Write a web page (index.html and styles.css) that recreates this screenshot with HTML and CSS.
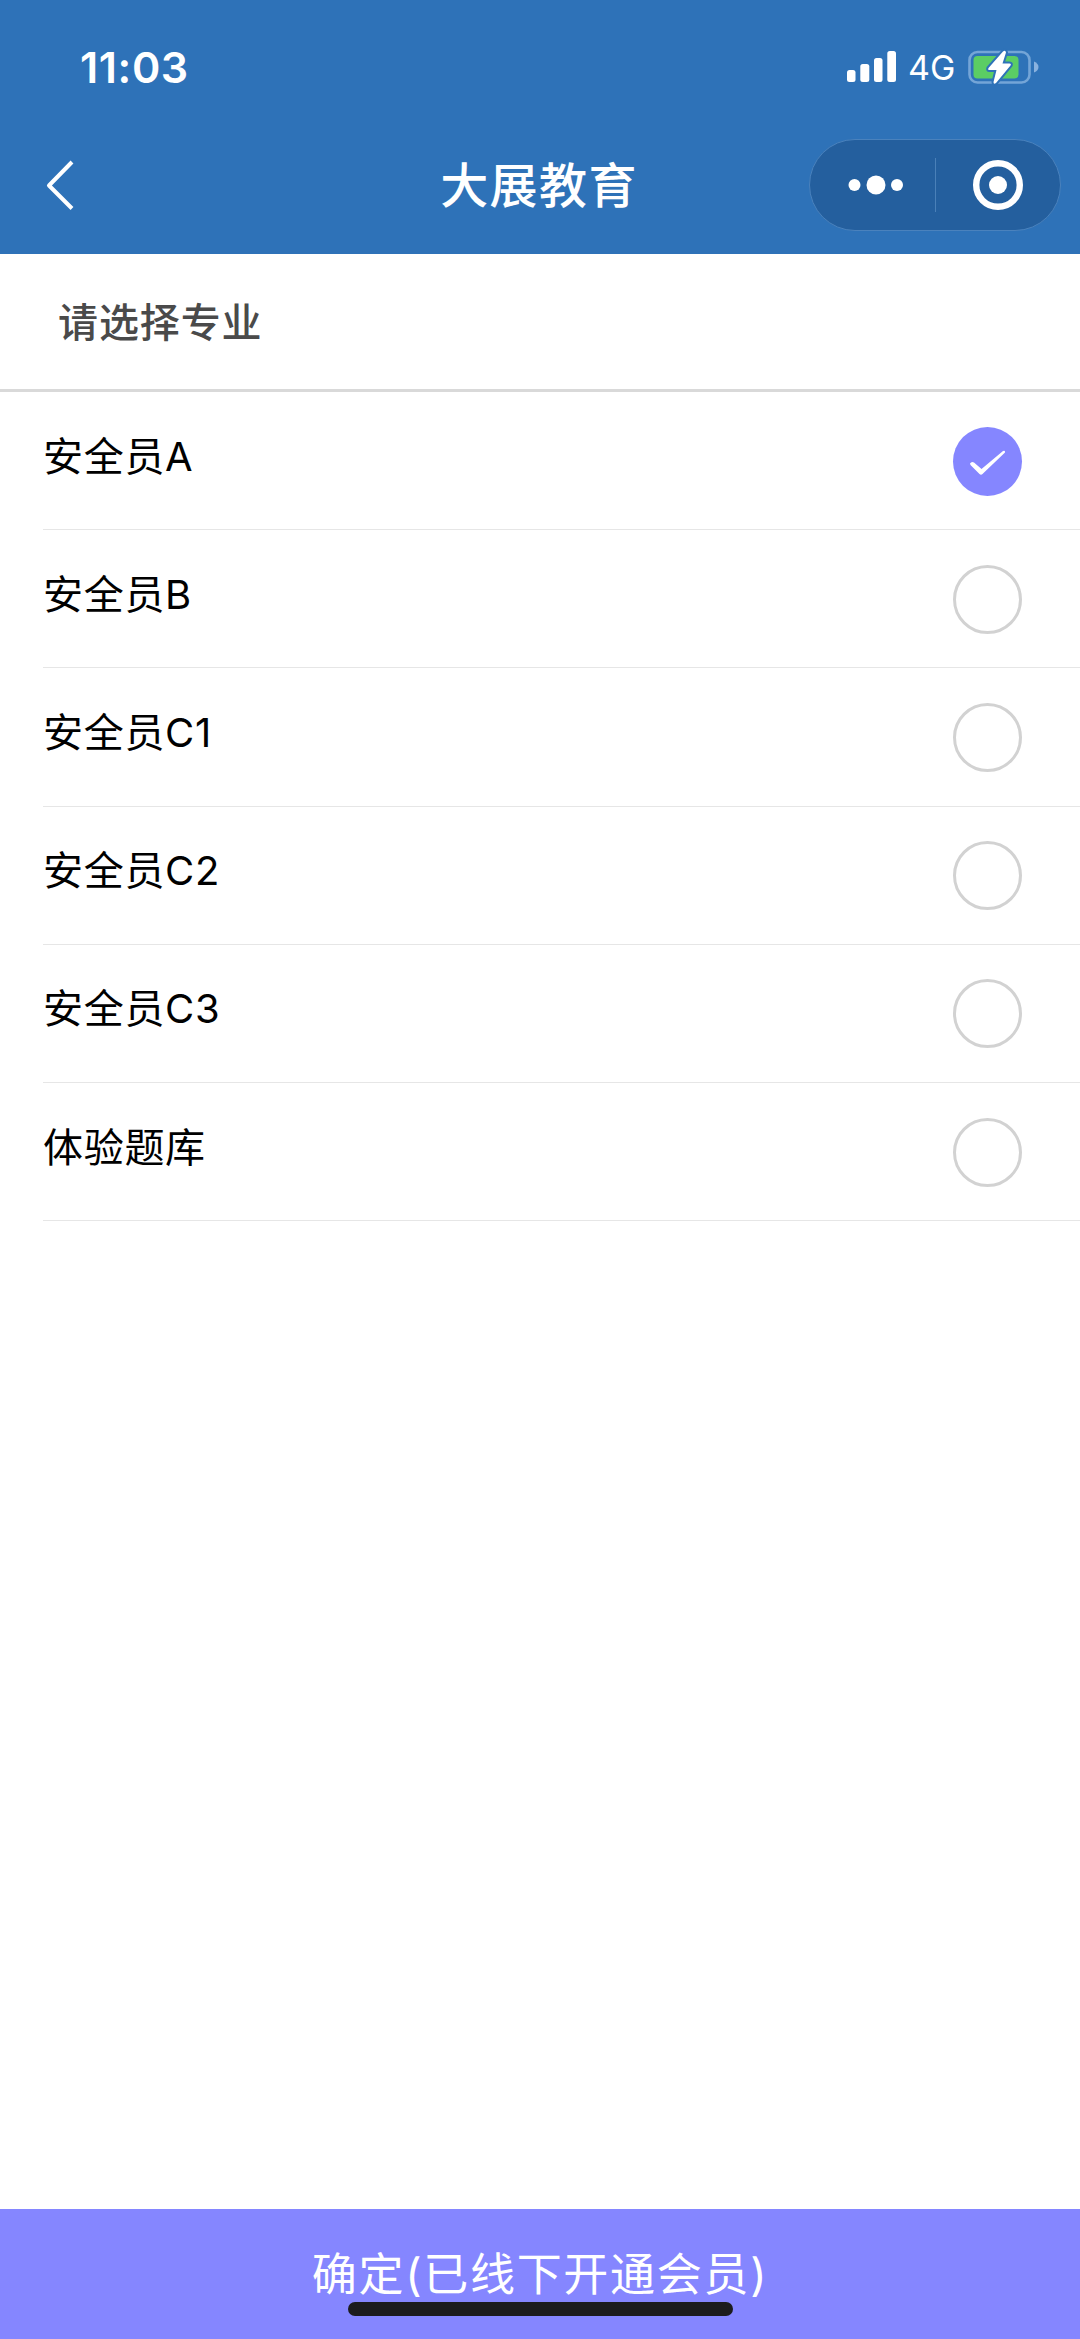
FILE: index.html
```html
<!DOCTYPE html>
<html lang="zh-CN">
<head>
<meta charset="utf-8">
<title>大展教育</title>
<link rel="stylesheet" href="styles.css">
</head>
<body>
<div class="app">
  <header class="header">
    <div class="status">
      <span class="time">11:03</span>
      <div class="indicators">
        <svg class="signal" viewBox="0 0 49 31" fill="#fff"><rect y="19" width="8.5" height="12" rx="2.5"/><rect x="13.3" y="13" width="9" height="18" rx="2.5"/><rect x="27" y="7" width="8.5" height="24" rx="2.5"/><rect x="40.3" width="8.7" height="31" rx="2.5"/></svg>
        <span class="network">4G</span>
        <svg class="battery" viewBox="0 0 72 38">
          <rect x="1.5" y="4" width="60" height="30.500" rx="8" fill="none" stroke="#74a5d7" stroke-width="2.600"/>
          <rect x="5.500" y="8" width="45" height="22.500" rx="4" fill="#5bcd64"/>
          <path d="M66 13.500q4.500 2 4.500 5.500t-4.500 5.500z" fill="#8ab2df"/>
          <path d="M35 3.500 20.500 20q-1 2 1 2h7L25.500 34q0 3 2.500 1L42.500 17.500q1-2-1-2h-7L38 4.500q-.5-3-3-1z" fill="#fff" stroke="#2e72b8" stroke-width="4" paint-order="stroke"/>
        </svg>
      </div>
    </div>
    <div class="navbar">
      <svg class="back" viewBox="0 0 30 52" fill="none" stroke="#fff" stroke-width="4"><path d="M27 3 4 26.500 27 49.500" stroke-linejoin="round"/></svg>
      <h1 class="title">大展教育</h1>
      <div class="capsule">
        <svg class="more" viewBox="0 0 56 20" fill="#fff"><circle cx="6.500" cy="10" r="6"/><circle cx="28" cy="10" r="9.500"/><circle cx="49" cy="10" r="6"/></svg>
        <span class="divider"></span>
        <svg class="target" viewBox="0 0 52 52"><circle cx="26" cy="26" r="21.800" fill="none" stroke="#fff" stroke-width="6.400"/><circle cx="26" cy="26" r="9" fill="#fff"/></svg>
      </div>
    </div>
  </header>
  <h2 class="prompt">请选择专业</h2>
  <ul class="options">
    <li class="option"><span class="label">安全员A</span><span class="radio checked"><svg class="tick" viewBox="0 0 69 69" fill="#fff"><path d="M17 36.500q1.500-2.500 4-1l7.500 6.500L50 24q2.500-1 2 1.500L29.500 47q-1.500 1.500-3 0L17.500 38z"/></svg></span></li>
    <li class="option"><span class="label">安全员B</span><span class="radio"></span></li>
    <li class="option"><span class="label">安全员C1</span><span class="radio"></span></li>
    <li class="option"><span class="label">安全员C2</span><span class="radio"></span></li>
    <li class="option"><span class="label">安全员C3</span><span class="radio"></span></li>
    <li class="option"><span class="label">体验题库</span><span class="radio"></span></li>
  </ul>
  <button class="confirm">确定(已线下开通会员)</button>
  <div class="home-indicator"></div>
</div>
</body>
</html>
```
FILE: styles.css
```css
* { box-sizing: border-box; }

body {
  margin: 0;
  background: #fff;
  font-family: Inter, "Noto Sans CJK SC", sans-serif;
}

.app {
  position: relative;
  display: flex;
  flex-direction: column;
  height: 2339px;
}

svg { display: block; }

.header {
  height: 253.500px;
  background: #2e72b8;
  color: #fff;
}

.status {
  display: flex;
  justify-content: space-between;
  align-items: center;
  height: 133px;
  padding: 0 40px 0 80px;
}

.time {
  font-size: 43px;
  font-weight: 600;
  line-height: 50px;
  letter-spacing: .6px;
}

.indicators { display: flex; align-items: center; }
.signal { width: 49px; height: 31px; }

.network {
  width: 47px;
  margin: 3px 13px 0 12px;
  font-size: 34px;
  line-height: 40px;
}

.battery { width: 72px; height: 38px; }

.navbar {
  display: grid;
  grid-template-columns: 1fr auto 1fr;
  align-items: center;
  height: 103px;
  padding: 0 19px 0 45px;
}

.back { width: 30px; height: 52px; }

.title {
  margin: 3px 0 0 -28px;
  font-size: 48px;
  font-weight: 500;
  line-height: 60px;
  letter-spacing: 1.400px;
}

.capsule {
  display: flex;
  align-items: center;
  justify-self: end;
  width: 252px;
  height: 92px;
  padding-left: 38px;
  border: 1.500px solid #4a82bd;
  border-radius: 46px;
  background: #245f9e;
}

.more { width: 56px; height: 20px; }
.divider { width: 1px; height: 54px; margin: 0 36px 0 31px; background: #4a80b8; }
.target { width: 52px; height: 52px; }

.prompt {
  height: 138.500px;
  margin: 0;
  padding: 39px 58px 0;
  border-bottom: 3px solid #d9d9d9;
  color: #4a4a4a;
  font-size: 40px;
  font-weight: 500;
  line-height: 60px;
  letter-spacing: .9px;
}

.options { margin: 0; padding: 0 0 0 43px; list-style: none; }

.option {
  display: flex;
  justify-content: space-between;
  align-items: center;
  height: 138.200px;
  padding: 1px 58px 0 0;
  border-bottom: 1.500px solid #e6e6e6;
}

.label {
  margin-top: -9px;
  color: #000;
  font-size: 40px;
  line-height: 60px;
  letter-spacing: .7px;
}

.radio {
  width: 69px;
  height: 69px;
  border: 3px solid #d2d2d2;
  border-radius: 50%;
}

.checked { border: 0; background: #8586ff; }
.tick { width: 69px; height: 69px; }

.confirm {
  height: 130px;
  margin-top: auto;
  padding: 0 0 5px;
  border: 0;
  background: #8586ff;
  color: #fff;
  font: inherit;
  font-size: 45px;
  letter-spacing: 1.700px;
}

.home-indicator {
  position: absolute;
  bottom: 23px;
  left: 348px;
  width: 385px;
  height: 14px;
  border-radius: 7px;
  background: #1c1c1e;
}
```
